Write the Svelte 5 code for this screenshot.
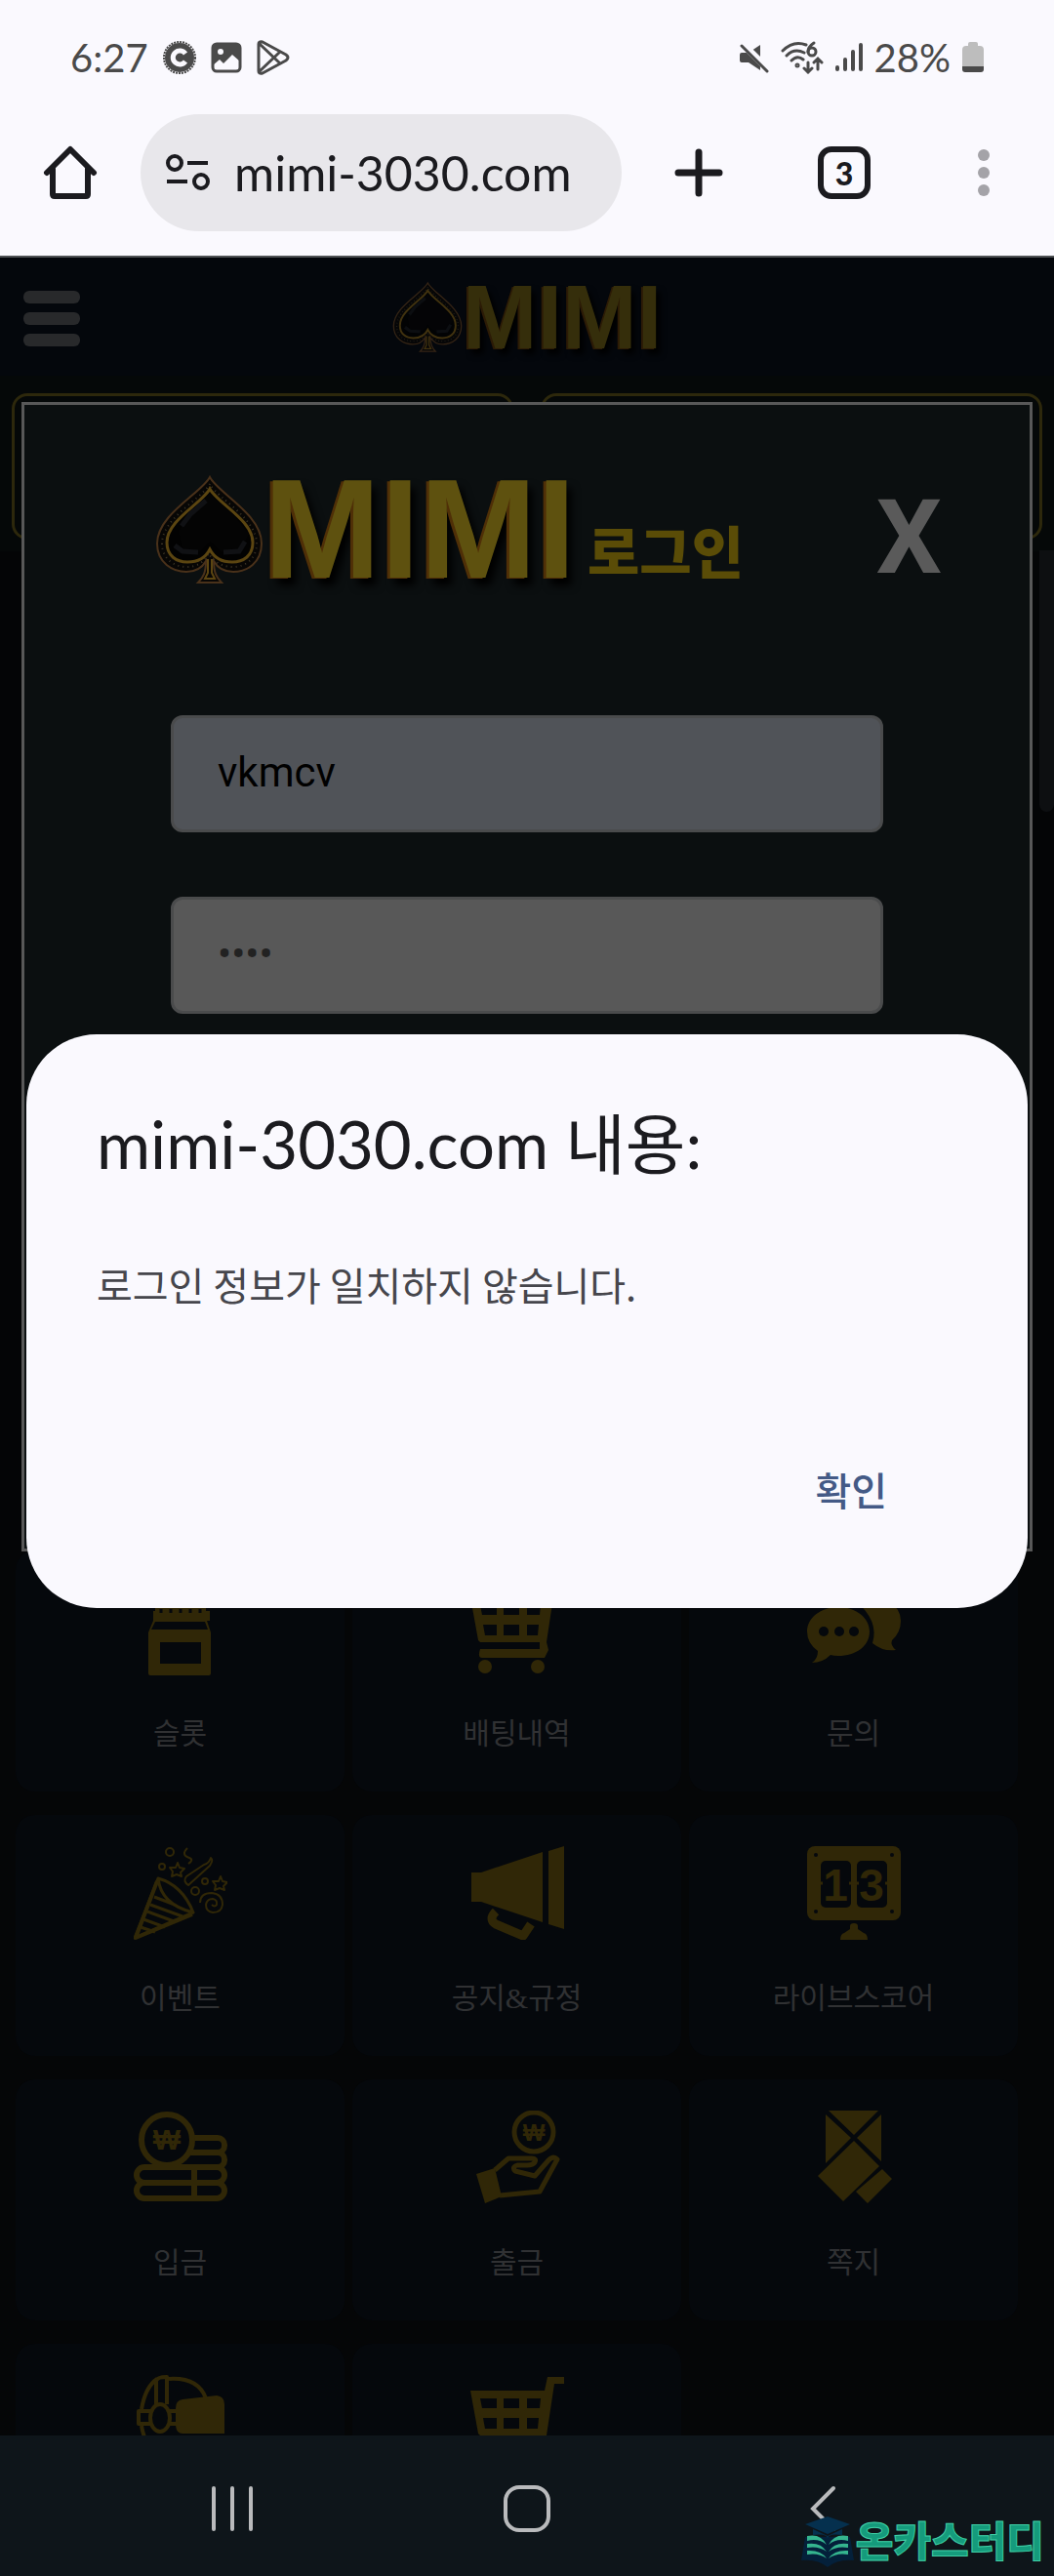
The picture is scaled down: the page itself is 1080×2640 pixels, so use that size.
<script>
    let userId = 'vkmcv';
    let password = '1234';
    let loginOpen = true;
    let alertOpen = true;

    const menu = [
        { icon: 'slot', label: '슬롯' },
        { icon: 'cart', label: '배팅내역' },
        { icon: 'chat', label: '문의' },
        { icon: 'event', label: '이벤트' },
        { icon: 'notice', label: '공지&규정' },
        { icon: 'score', label: '라이브스코어' },
        { icon: 'deposit', label: '입금' },
        { icon: 'withdraw', label: '출금' },
        { icon: 'message', label: '쪽지' },
        { icon: 'vr', label: '' },
        { icon: 'cart', label: '' },
    ];
</script>

{#snippet spade()}
    <svg class="spade" viewBox="-2 -2 111 112" fill="none" aria-hidden="true">
        <path d="M54 0C46 16 0 38 0 68C0 88 16 97 30 97C40 97 46 93 50 86C50 98 47 103 42 108H66C61 103 58 98 58 86C62 93 68 97 78 97C92 97 107 88 107 68C107 38 62 16 54 0Z" fill="#070605" stroke="#49311a" stroke-width="2" />
        <path d="M54 7C46 22 5 42 5 68C5 84 18 92 30 92C40 92 48 88 53 78C58 88 68 92 78 92C90 92 102 84 102 68C102 42 62 22 54 7Z" stroke="#3d3526" stroke-width="2" stroke-dasharray="1 4" />
        <path d="M54 12C46 27 10 44 10 67C10 81 20 87 31 87C42 87 50 82 54 74C58 82 66 87 77 87C88 87 98 81 98 67C98 44 62 27 54 12Z" fill="#020202" stroke="#5b4511" stroke-width="3" />
        <path d="M54 17L30 38L22 56L26 74L43 77L54 66L66 77L86 74L94 58L78 38Z" fill="#040404" />
        <path d="M50 24L34 38L25 50M18 70L26 76L42 77M68 77L84 76L90 66" stroke="#101114" stroke-width="5" />
        <path d="M52 84V98L49 104H59L56 98V84" stroke="#5b4511" stroke-width="2" />
    </svg>
{/snippet}

<div class="screen">
    <div class="status">
        <span>6:27</span>
        <svg class="badge" width="36" height="36" viewBox="0 0 36 36">
            <circle cx="18" cy="18" r="15" fill="#4a4a4a" />
            <circle cx="18" cy="18" r="16" fill="none" stroke="#4a4a4a" stroke-width="2" stroke-dasharray="2 1" />
            <path d="M24 14a7 7 0 1 0 0 8" fill="none" stroke="#faf9fe" stroke-width="5" />
        </svg>
        <svg width="32" height="32" viewBox="0 0 32 32">
            <rect x="2" y="2" width="28" height="28" rx="4" fill="#faf9fe" stroke="#4a4a4a" stroke-width="3" />
            <path d="M2 2H30V20L22 13L13 22L9 18L2 24Z" fill="#4a4a4a" />
            <circle cx="10" cy="10" r="3" fill="#faf9fe" />
        </svg>
        <svg width="36" height="36" viewBox="0 0 36 36" fill="none" stroke="#4a4a4a" stroke-width="3" stroke-linejoin="round">
            <path d="M3 4Q3 1 7 2L31 15Q35 18 31 21L7 34Q3 35 3 32ZM4 4L25 24M4 32L25 12" />
        </svg>
        <div class="status-right">
            <svg width="32" height="32" viewBox="0 0 32 32">
                <path d="M2 13q0-2 2-2h7L23 3V29L11 21H4q-2 0-2-2Z" fill="#4a4a4a" />
                <path d="M4 1L32 29" stroke="#faf9fe" stroke-width="7" />
                <path d="M4 4L30 30" stroke="#4a4a4a" stroke-width="3" stroke-linecap="round" />
            </svg>
            <svg class="wifi" width="44" height="34" viewBox="0 0 44 34" fill="none" stroke="#4a4a4a" stroke-width="3" stroke-linecap="round">
                <path d="M2 10Q13 -1 26 4M6 15Q14 7 24 12M11 20Q17 14 23 19M28 22V32M24 28L28 32L32 28M38 29V18M34 22L38 18L42 22" />
                <circle cx="17" cy="25" r="1" />
                <path d="M34 2Q28 6 28 11" />
                <circle cx="32" cy="11" r="4" />
            </svg>
            <svg width="28" height="30" viewBox="0 0 28 30" stroke="#4a4a4a" stroke-width="4" stroke-linecap="round">
                <path d="M2 25V27M10 17V27M18 9V27M26 2V27" />
            </svg>
            <span>28%</span>
            <svg width="22" height="32" viewBox="0 0 22 32">
                <path d="M6 4V2q0-2 2-2h6q2 0 2 2V4h2q4 0 4 4V25H0V8Q0 4 4 4Z" fill="#bdbdbd" />
                <path d="M0 25H22V28q0 3-3 3H3q-3 0-3-3Z" fill="#4a4a4a" />
            </svg>
        </div>
    </div>

    <div class="toolbar">
        <button aria-label="홈">
            <svg width="56" height="56" viewBox="0 0 56 56" fill="none" stroke="#1b1b1f" stroke-width="6" stroke-linecap="round" stroke-linejoin="round">
                <path d="M4 28L28 4L52 28M10 24V50Q10 52 12 52H44Q46 52 46 50V24" />
            </svg>
        </button>
        <div class="address">
            <svg width="48" height="40" viewBox="0 0 48 40" fill="none" stroke="#1b1b1f" stroke-width="4">
                <circle cx="11" cy="10" r="7" />
                <circle cx="38" cy="29" r="7" />
                <path d="M24 10H45M3 29H24" />
            </svg>
            <input aria-label="주소" value="mimi-3030.com" />
        </div>
        <button aria-label="새 탭">
            <svg width="50" height="50" viewBox="0 0 50 50" stroke="#1b1b1f" stroke-width="7" stroke-linecap="round">
                <path d="M25 4V46M4 25H46" />
            </svg>
        </button>
        <button class="tabs">3</button>
        <button aria-label="메뉴">
            <svg width="12" height="48" viewBox="0 0 12 48" fill="#a4a3a8">
                <circle cx="6" cy="6" r="6" /><circle cx="6" cy="24" r="6" /><circle cx="6" cy="42" r="6" />
            </svg>
        </button>
    </div>

    <main>
        <header>
            <button class="hamburger" aria-label="전체 메뉴"><i></i><i></i><i></i></button>
            <a class="logo small" href="#home">{@render spade()}<b>MIMI</b></a>
        </header>
        <div class="panels">
            <div></div>
            <div></div>
        </div>
        <div class="banner"></div>
        <nav class="menu">
            {#each menu as item}
                <a href="#menu">
                    <svg width="96" height="96" viewBox="0 0 96 96" fill="#302707" stroke="#302707" stroke-width="0" stroke-linejoin="round" aria-hidden="true">
                        {#if item.icon === 'slot'}
                            <path d="M22 8H74V30H78V40H75L79 52V94Q79 96 77 96H17Q15 96 15 94V52L20 40V30H22Z" />
                            <path d="M22 41H73L76 49H18ZM27 62H69V84H27Z" fill="#05080c" />
                            <path d="M28 28V32M38 28V32M48 28V32M58 28V32M68 28V32" stroke="#05080c" stroke-width="3" />
                        {:else if item.icon === 'cart'}
                            <path d="M0 16H76L79 2H96V9H86L78 62L80 70L76 78H12Q7 78 10 69V62L8 60Z" />
                            <path d="M10 24H27V34H12ZM34 24H50V34H34ZM58 24H72L71 34H58ZM13 44H27V55H15ZM34 44H50V55H34ZM58 44H70L69 55H58ZM10 62H71V69H10Z" fill="#05080c" />
                            <circle cx="15" cy="87" r="7" /><circle cx="69" cy="87" r="7" />
                        {:else if item.icon === 'chat'}
                            <path d="M50 20Q68 12 84 20Q96 28 96 40Q96 52 87 60Q85 65 91 70Q78 72 67 63Q74 40 50 20Z" />
                            <path d="M32 26C50 26 64 37 64 51C64 66 50 76 32 76Q27 76 24 75Q16 83 5 83Q11 79 11 71Q0 63 0 51C0 37 14 26 32 26Z" />
                            <g fill="#05080c"><circle cx="17" cy="51" r="5" /><circle cx="33" cy="51" r="5" /><circle cx="48" cy="51" r="5" /></g>
                        {:else if item.icon === 'event'}
                            <g fill="none" stroke-width="3">
                                <path d="M1 94L25 33Q50 40 61 68ZM25 33Q28 60 61 68M21 52L42 60M17 60L50 72M14 67L41 77M10 75L32 83M7 83L22 88" />
                                <path d="M24 36L2 94L60 70" stroke-width="4" />
                                <g stroke-width="2">
                                    <circle cx="37" cy="6" r="4" /><circle cx="29" cy="21" r="3" /><circle cx="73" cy="36" r="3" /><circle cx="63" cy="46" r="4" />
                                    <path d="M55 2Q48 9 57 12Q62 14 56 18M79 12Q82 14 78 20L56 40Q50 36 54 31L72 19Q77 18 79 12Z" />
                                    <path d="M45 17L47 22L52 23L48 27L49 31L44 29L39 31L40 26L37 22L43 22ZM89 31L91 36L96 37L92 41L93 45L88 43L83 45L84 40L81 36L87 36Z" />
                                    <path d="M68 58Q68 48 80 48Q91 49 91 60Q90 68 81 68Q74 67 74 60Q75 54 81 54Q86 55 85 60Q83 63 80 60" />
                                </g>
                            </g>
                        {:else if item.icon === 'notice'}
                            <path d="M1 27H11L74 6V78L11 57H1ZM80 5L96 0V85L80 80Z" />
                            <path d="M26 67Q18 75 26 80L54 92L62 80" fill="none" stroke-width="9" />
                        {:else if item.icon === 'score'}
                            <rect width="96" height="76" rx="8" />
                            <path d="M44 82Q44 79 48 79Q52 79 52 82V85L58 89Q62 90 62 96H34Q34 90 38 89L44 85Z" />
                            <g fill="#05080c">
                                <rect x="14" y="15" width="31" height="48" rx="5" /><rect x="51" y="15" width="31" height="48" rx="5" />
                                <circle cx="9" cy="9" r="2" /><circle cx="87" cy="9" r="2" /><circle cx="9" cy="67" r="2" /><circle cx="87" cy="67" r="2" />
                            </g>
                            <path d="M13 38H16M43 38H53M80 38H83" stroke-width="3" />
                            <text x="29" y="56" text-anchor="middle" font-size="46">1</text>
                            <text x="66" y="56" text-anchor="middle" font-size="46">3</text>
                        {:else if item.icon === 'deposit'}
                            <g fill="none" stroke-width="6">
                                <rect x="40" y="28" width="53" height="15" rx="7" /><rect x="40" y="43" width="53" height="15" rx="7" />
                                <circle cx="34" cy="30" r="26" fill="#05080c" />
                                <rect x="3" y="58" width="90" height="16" rx="8" fill="#05080c" />
                                <rect x="3" y="74" width="90" height="16" rx="8" />
                                <path d="M62 58V90" />
                            </g>
                            <text x="34" y="40" text-anchor="middle" font-size="30">₩</text>
                        {:else if item.icon === 'withdraw'}
                            <g fill="none" stroke-width="5">
                                <circle cx="65" cy="22" r="20" />
                                <path d="M25 61L39 49H63Q68 49 66 53Q64 56 58 56H48Q42 58 46 62L66 67L80 51Q85 46 89 50L71 83L30 87" />
                            </g>
                            <path d="M6 65L25 59L32 88L15 95Z" />
                            <text x="65" y="31" text-anchor="middle" font-size="24">₩</text>
                        {:else if item.icon === 'message'}
                            <path d="M22 0H73L48 25ZM19 4L45 28L19 54ZM76 4L51 28L76 52ZM48 31L74 57L37 93L11 67ZM77 60L87 70L62 95L50 83Z" />
                        {:else}
                            <g fill="none" stroke-width="4">
                                <path d="M8 35Q12 12 24 4M36 4Q66 2 74 24M23 30V6Q24 2 34 2V30M8 52Q10 66 18 74" />
                                <ellipse cx="27" cy="44" rx="10" ry="14" />
                                <path d="M17 37H5V50H17M37 37H46M37 50H46" />
                            </g>
                            <path d="M43 34Q43 26 50 25L85 21Q93 22 93 30V60H50Q44 60 43 52Z" />
                        {/if}
                    </svg>
                    <span>{item.label}</span>
                </a>
            {/each}
        </nav>
        <div class="scrollbar"></div>

        {#if loginOpen}
            <form class="login" on:submit|preventDefault={() => (alertOpen = true)}>
                <div class="login-head">
                    <div class="logo">{@render spade()}<b>MIMI</b></div>
                    <h1>로그인</h1>
                    <button type="button" class="close" on:click={() => (loginOpen = false)}>X</button>
                </div>
                <input class="filled" type="text" aria-label="아이디" bind:value={userId} />
                <input type="password" aria-label="비밀번호" bind:value={password} />
            </form>
        {/if}

        {#if alertOpen}
            <div class="overlay">
                <div class="alert" role="alertdialog" aria-labelledby="alert-title">
                    <h2 id="alert-title">mimi-3030.com 내용:</h2>
                    <p>로그인 정보가 일치하지 않습니다.</p>
                    <button on:click={() => (alertOpen = false)}>확인</button>
                </div>
            </div>
        {/if}
    </main>

    <footer>
        <button aria-label="최근 앱">
            <svg width="48" height="48" viewBox="0 0 48 48" stroke="#b9babc" stroke-width="4" stroke-linecap="round">
                <path d="M5 3V45M24 3V45M43 3V45" />
            </svg>
        </button>
        <button aria-label="홈 화면">
            <svg width="48" height="48" viewBox="0 0 48 48" fill="none" stroke="#b9babc" stroke-width="4">
                <rect x="2" y="2" width="44" height="44" rx="14" />
            </svg>
        </button>
        <button aria-label="뒤로">
            <svg width="48" height="48" viewBox="0 0 48 48" fill="none" stroke="#b9babc" stroke-width="4" stroke-linecap="round">
                <path d="M36 3L15 24L36 45" />
            </svg>
        </button>
        <div class="mark">
            <svg width="54" height="54" viewBox="0 0 54 54">
                <path d="M4 22L0 46Q16 44 27 53Q38 44 54 46L50 22Z" fill="#04203a" />
                <path d="M27 1L50 9L27 19L4 9ZM12 14L27 21L42 14V20Q27 18 27 24Q27 18 12 20Z" fill="#05304e" />
                <path d="M6 21Q20 18 26 30Q18 23 6 26ZM6 29Q20 27 26 37Q18 31 6 33ZM6 36Q20 35 26 44Q18 38 6 40ZM48 21Q34 18 28 30Q36 23 48 26ZM48 29Q34 27 28 37Q36 31 48 33ZM48 36Q34 35 28 44Q36 38 48 40Z" fill="#35b58f" />
            </svg>
            <strong>온카스터디</strong>
        </div>
    </footer>
</div>

<style>
    :global(body) {
        margin: 0;
        background: #050607;
    }

    .screen {
        height: 100vh;
        display: flex;
        flex-direction: column;
        font-family: Lato, 'Noto Sans CJK KR', sans-serif;
        color: #1b1b1f;
        overflow: hidden;
    }

    button {
        flex: none;
        padding: 0;
        border: 0;
        background: none;
        font-family: inherit;
        color: inherit;
        display: flex;
        cursor: pointer;
    }

    input {
        font-family: inherit;
        box-sizing: border-box;
        min-width: 0;
    }

    a {
        color: inherit;
        text-decoration: none;
    }

    .status {
        display: flex;
        align-items: center;
        gap: 14px;
        height: 118px;
        padding: 0 72px;
        box-sizing: border-box;
        background: #faf9fe;
        color: #4a4a4a;
        font-size: 40px;
        line-height: 48px;
    }

    .status-right {
        margin-left: auto;
        display: flex;
        align-items: center;
        gap: 12px;
    }

    .toolbar {
        display: flex;
        align-items: center;
        height: 146px;
        padding: 0 66px 26px 44px;
        box-sizing: border-box;
        background: #faf9fe;
        border-bottom: 2px solid #4e5154;
    }

    .address {
        flex: 1;
        min-width: 0;
        height: 120px;
        margin: 0 54px 0 44px;
        border-radius: 60px;
        background: #e8e7eb;
        display: flex;
        align-items: center;
        gap: 24px;
        padding: 0 24px;
        box-sizing: border-box;
    }

    .address svg {
        flex: none;
    }

    .address input {
        flex: 1;
        height: 80px;
        border: 0;
        padding: 0;
        background: none;
        font-size: 50px;
        color: #1b1b1f;
    }

    .tabs {
        width: 54px;
        height: 54px;
        margin: 0 110px 0 97px;
        box-sizing: border-box;
        border: 6px solid #1b1b1f;
        border-radius: 14px;
        align-items: center;
        justify-content: center;
        font-size: 32px;
        font-weight: 900;
    }

    main {
        position: relative;
        flex: 1;
        min-height: 0;
        overflow: hidden;
        background: #050607;
    }

    header {
        height: 121px;
        display: flex;
        align-items: center;
        justify-content: center;
        position: relative;
        background: #04070c;
    }

    .hamburger {
        position: absolute;
        left: 24px;
        top: 34px;
        flex-direction: column;
        gap: 9px;
    }

    .hamburger i {
        width: 58px;
        height: 13px;
        border-radius: 6px;
        background: #28292b;
    }

    .logo {
        display: flex;
        align-items: center;
    }

    .logo b {
        font-family: 'Liberation Sans', sans-serif;
        font-size: 144px;
        line-height: 120px;
        color: #5e510f;
        text-shadow: -3px 1px 0 #4f2f07, 5px 8px 8px #000;
    }

    .logo .spade {
        width: 111px;
        height: 112px;
    }

    .logo.small b {
        font-size: 92px;
        color: #352e0b;
        text-shadow: -2px 1px 0 #2c1b06, 4px 6px 6px #000;
    }

    .logo.small .spade {
        width: 72px;
        height: 84px;
        opacity: 0.7;
    }

    .panels {
        display: grid;
        grid-template-columns: 1fr 1fr;
        gap: 28px;
        padding: 18px 12px 12px;
        background: #050808;
    }

    .panels div {
        height: 150px;
        box-sizing: border-box;
        border: 3px solid #2d280c;
        border-radius: 16px;
    }

    .banner {
        height: 1024px;
        background: #040506;
    }

    .menu {
        display: grid;
        grid-template-columns: repeat(3, 1fr);
        gap: 24px 8px;
        padding: 0 37px 0 16px;
    }

    .menu a {
        display: flex;
        flex-direction: column;
        align-items: center;
        gap: 38px;
        height: 247px;
        padding-top: 32px;
        box-sizing: border-box;
        border-radius: 20px;
        background: #05080c;
        color: #303133;
        font-family: 'Liberation Serif', 'Noto Sans CJK KR', serif;
        font-size: 30px;
        line-height: 44px;
    }

    .menu text {
        font-family: 'Liberation Sans', 'Noto Sans CJK KR', sans-serif;
        font-weight: bold;
    }

    .scrollbar {
        position: absolute;
        right: 0;
        top: 300px;
        width: 15px;
        height: 268px;
        border-radius: 0 0 8px 8px;
        background: #0d0f11;
    }

    .login {
        position: absolute;
        top: 148px;
        left: 22px;
        right: 22px;
        height: 1178px;
        box-sizing: border-box;
        border: 3px solid #585858;
        background: #0b0f10;
        padding: 68px 150px 0;
        display: flex;
        flex-direction: column;
        gap: 66px;
    }

    .login-head {
        display: flex;
        align-items: center;
        height: 120px;
        margin: 0 -60px 64px -16px;
    }

    .login-head h1 {
        margin: 40px 0 0 12px;
        font-family: 'Noto Sans CJK KR', sans-serif;
        font-size: 58px;
        line-height: 64px;
        font-weight: 900;
        color: #5a4c07;
    }

    .close {
        margin: 16px 0 0 auto;
        font-family: Roboto, sans-serif;
        font-size: 106px;
        line-height: 120px;
        font-weight: 700;
        color: #5a5a5a;
    }

    .login input {
        height: 120px;
        border: 3px solid #4a4b4c;
        border-radius: 12px;
        padding: 0 45px 4px;
        background: #585858;
        font-family: Roboto, sans-serif;
        font-size: 42px;
        color: #222;
    }

    .login input.filled {
        background: #505358;
        color: #000;
    }

    .overlay {
        position: absolute;
        inset: 0;
        padding: 796px 27px 0;
    }

    .alert {
        background: #faf9fe;
        border-radius: 72px;
        padding: 68px 72px 66px;
        display: flex;
        flex-direction: column;
        align-items: flex-start;
    }

    .alert h2 {
        margin: 0;
        font-size: 67px;
        line-height: 88px;
        font-weight: 400;
    }

    .alert p {
        margin: 70px 0 124px;
        font-family: 'Noto Sans CJK KR', sans-serif;
        font-size: 40px;
        line-height: 60px;
        color: #46464c;
    }

    .alert button {
        align-self: flex-end;
        padding: 20px 72px;
        font-family: 'Noto Sans CJK KR', sans-serif;
        font-size: 40px;
        line-height: 72px;
        font-weight: 500;
        color: #445a86;
    }

    footer {
        position: relative;
        flex: none;
        height: 144px;
        padding-top: 6px;
        box-sizing: border-box;
        display: grid;
        grid-template-columns: repeat(3, 302px);
        justify-content: center;
        align-items: center;
        background: #0e151a;
    }

    footer button {
        justify-content: center;
    }

    .mark {
        position: absolute;
        right: 10px;
        bottom: 8px;
        display: flex;
        align-items: flex-start;
        gap: 2px;
    }

    .mark strong {
        font-family: 'Noto Sans CJK KR', sans-serif;
        font-size: 42px;
        line-height: 48px;
        font-weight: 900;
        color: #159b7c;
        -webkit-text-stroke: 1px #3fcfa5;
    }
</style>
